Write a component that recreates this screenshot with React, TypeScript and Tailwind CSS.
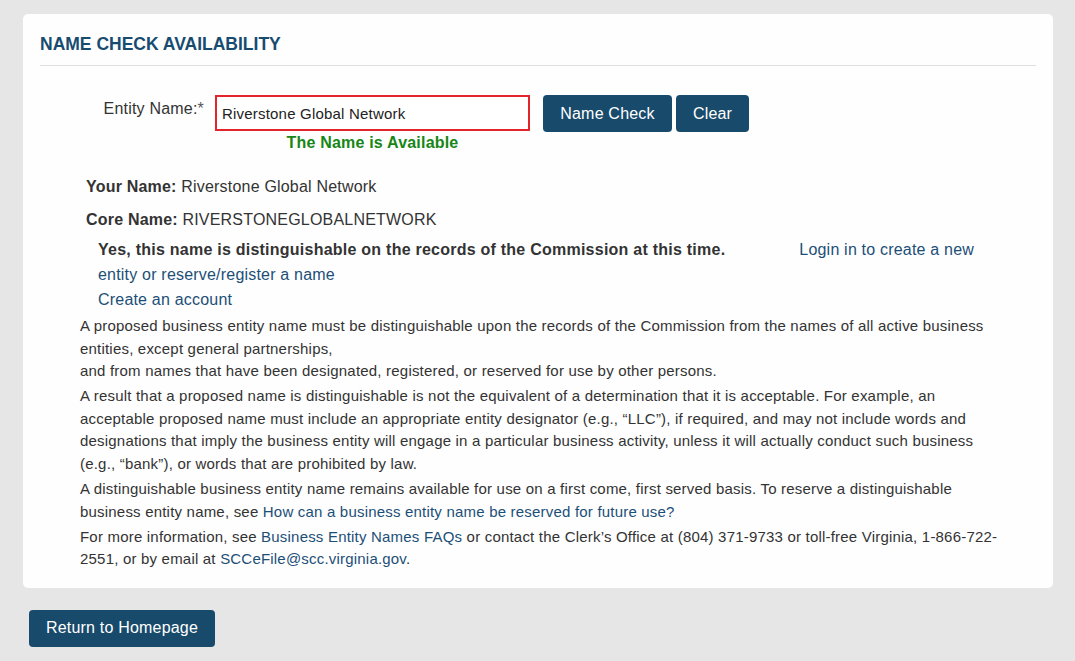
import React from "react"

const FONT = "font-['Liberation_Sans',Arial,sans-serif]"

export default function App(): React.JSX.Element {
  return (
    <div className={`min-h-[661px] bg-[#e5e6e5] pt-[14px] ${FONT} text-[#333] tracking-[0.2px]`}>
      {/* Card */}
      <div className="mx-[23px] w-[1030px] rounded-[5px] bg-[#fefefe] px-[17px] pb-[17px]">
        <div className="flex h-[52px] items-end border-b border-[#dedede] pb-[10px]">
          <h1 className="text-[17.5px] leading-[22px] font-bold tracking-[0px] text-[#174b70]">NAME CHECK AVAILABILITY</h1>
        </div>

        {/* Entity name row */}
        <div className="mt-[29px] flex items-start">
          <label className="w-[164px] pt-[2px] text-right text-[16px] leading-[24px] text-[#333]">
            Entity Name:<span className="text-[#555]">*</span>
          </label>
          <div className="ml-[11px] flex w-[315px] flex-col">
            <input
              type="text"
              defaultValue="Riverstone Global Network"
              className="h-[36px] w-full border-2 border-[#e3242b] bg-white px-[5px] text-[15px] tracking-[0.2px] text-[#222] outline-none"
            />
            <div className="text-center text-[16px] leading-[24px] font-bold text-[#168616]">
              The Name is Available
            </div>
          </div>
          <button
            type="button"
            className="ml-[13px] h-[37px] w-[129px] rounded-[4px] bg-[#184a6c] text-[16px] tracking-[0.2px] text-white"
          >
            Name Check
          </button>
          <button
            type="button"
            className="ml-[4px] h-[37px] w-[73px] rounded-[4px] bg-[#184a6c] text-[16px] tracking-[0.2px] text-white"
          >
            Clear
          </button>
        </div>

        {/* Results */}
        <div className="mt-[20px] pl-[46px] text-[16px] leading-[24px]">
          <b>Your Name:</b> Riverstone Global Network
        </div>
        <div className="mt-[9px] pl-[46px] text-[16px] leading-[24px]">
          <b>Core Name:</b> RIVERSTONEGLOBALNETWORK
        </div>
        <div className="mt-[5px] ml-[58px] w-[900px] text-[16px] leading-[25px]">
          <b className="tracking-[0.24px]">Yes, this name is distinguishable on the records of the Commission at this time.</b>
          <a href="#" className="ml-[74px] text-[#1c4f78]">
            Login in to create a new entity or reserve/register a name
          </a>
          <br />
          <a href="#" className="text-[#1c4f78]">Create an account</a>
        </div>

        {/* Notes */}
        <div className="mt-[3px] ml-[40px] w-[920px] text-[15px] leading-[22.5px] text-[#333]">
          <p>
            A proposed business entity name must be distinguishable upon the records of the Commission from the names
            of all active business entities, except general partnerships,
            <br />
            and from names that have been designated, registered, or reserved for use by other persons.
          </p>
          <p className="mt-[2.5px]">
            A result that a proposed name is distinguishable is not the equivalent of a determination that it is
            acceptable. For example, an acceptable proposed name must include an appropriate entity designator (e.g.,
            “LLC”), if required, and may not include words and designations that imply the business entity will
            engage in a particular business activity, unless it will actually conduct such business (e.g., “bank”), or
            words that are prohibited by law.
          </p>
          <p className="mt-[3px]">
            A distinguishable business entity name remains available for use on a first come, first served basis. To
            reserve a distinguishable business entity name, see{" "}
            <a href="#" className="text-[#1c4f78]">How can a business entity name be reserved for future use?</a>
          </p>
          <p className="mt-[2.5px]">
            For more information, see{" "}
            <a href="#" className="text-[#1c4f78]">Business Entity Names FAQs</a> or contact the Clerk’s Office at
            (804) 371-9733 or toll-free Virginia, 1-866-722-2551, or by email at{" "}
            <a href="#" className="text-[#1c4f78]">SCCeFile@scc.virginia.gov</a>.
          </p>
        </div>
      </div>

      <button
        type="button"
        className="mt-[22px] ml-[29px] h-[37px] w-[186px] rounded-[4px] bg-[#184a6c] text-[16px] tracking-[0.2px] text-white"
      >
        Return to Homepage
      </button>
    </div>
  )
}
